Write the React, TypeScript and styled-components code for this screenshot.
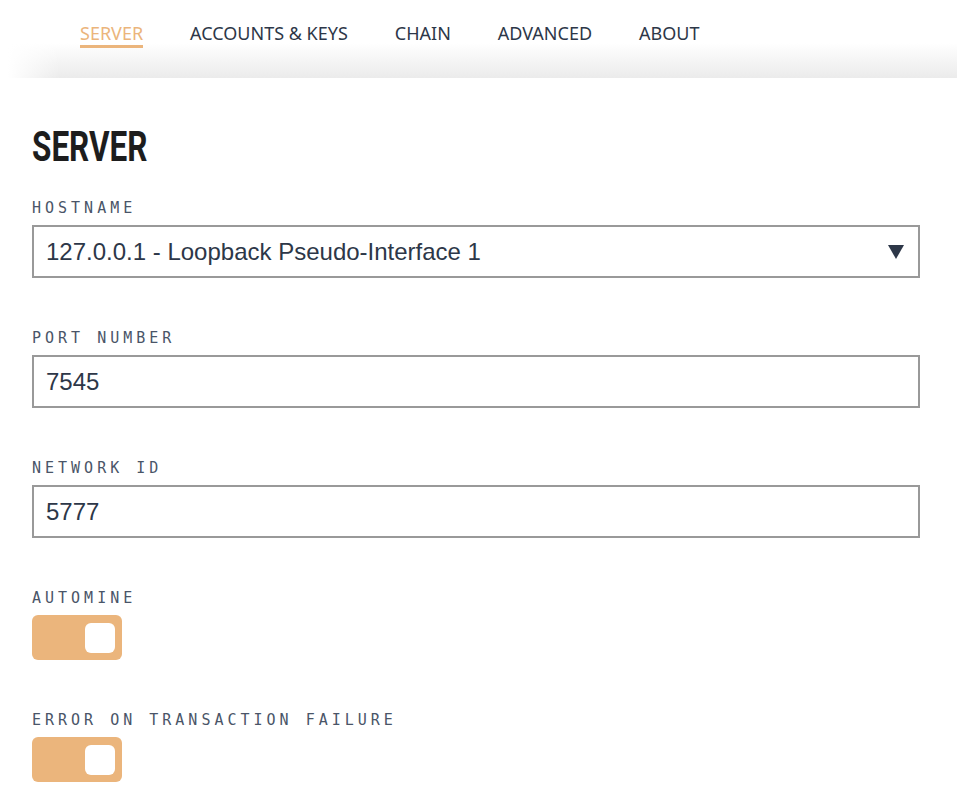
import React from "react";
import styled, { createGlobalStyle } from "styled-components";

const Global = createGlobalStyle`
  html, body { margin: 0; padding: 0; background: #fff; }
  body { font-family: "Noto Sans", sans-serif; overflow-x: hidden; }
  * { box-sizing: border-box; }
`;

const Page = styled.div`
  width: 957px;
  min-height: 807px;
  background: #fff;
`;

const Header = styled.header`
  height: 78px;
  display: flex;
  align-items: flex-start;
  padding: 21px 0 0 80px;
  gap: 47px;
  background:
    linear-gradient(to right, #fff 8px, rgba(255, 255, 255, 0) 60px),
    linear-gradient(to bottom, #fff 55%, #ebebeb 100%);
`;

const Tab = styled.a<{ $active?: boolean }>`
  font-family: "Noto Sans", sans-serif;
  font-size: 18px;
  line-height: 24px;
  color: ${(p) => (p.$active ? "#ebb57c" : "#2d3748")};
  text-decoration: none;
  border-bottom: 3px solid ${(p) => (p.$active ? "#ebb57c" : "transparent")};
  cursor: pointer;
`;

const Main = styled.main`
  padding: 44px 37px 0 32px;
`;

const Title = styled.h1`
  margin: 0 0 26px 0;
  font-family: Roboto, sans-serif;
  font-weight: 700;
  font-size: 42px;
  line-height: 50px;
  color: #1d1d1d;
  display: inline-block;
  transform: scaleX(0.75);
  transform-origin: left center;
`;

const Field = styled.div`
  display: flex;
  flex-direction: column;
  margin-bottom: 50px;
`;

const Label = styled.label`
  font-family: "DejaVu Sans Mono", monospace;
  font-size: 15px;
  line-height: 20px;
  letter-spacing: 4px;
  color: #4a5568;
  margin-bottom: 7px;
`;

const Box = styled.div`
  height: 53px;
  border: 2px solid #999;
  display: flex;
  align-items: center;
  justify-content: space-between;
  padding: 0 14px 0 12px;
  font-family: "Liberation Sans", Arial, sans-serif;
  font-size: 24px;
  color: #2d3748;
  background: #fff;
`;

const Arrow = styled.svg`
  width: 16px;
  height: 16px;
  fill: #2d3748;
  flex: none;
`;

const Toggle = styled.div<{ $on?: boolean }>`
  width: 90px;
  height: 45px;
  border-radius: 6px;
  background: ${(p) => (p.$on ? "#ebb57c" : "#ccc")};
  display: flex;
  align-items: center;
  justify-content: ${(p) => (p.$on ? "flex-end" : "flex-start")};
  padding: 0 7px;
`;

const Knob = styled.div`
  width: 30px;
  height: 30px;
  border-radius: 6px;
  background: #fff;
`;

export default function App() {
  return (
    <Page>
      <Global />
      <Header>
        <Tab $active>SERVER</Tab>
        <Tab>ACCOUNTS &amp; KEYS</Tab>
        <Tab>CHAIN</Tab>
        <Tab>ADVANCED</Tab>
        <Tab>ABOUT</Tab>
      </Header>
      <Main>
        <Title>SERVER</Title>
        <Field>
          <Label>HOSTNAME</Label>
          <Box>
            <span>127.0.0.1 - Loopback Pseudo-Interface 1</span>
            <Arrow viewBox="0 0 16 16">
              <polygon points="0,1 16,1 8,15" />
            </Arrow>
          </Box>
        </Field>
        <Field>
          <Label>PORT NUMBER</Label>
          <Box>7545</Box>
        </Field>
        <Field>
          <Label>NETWORK ID</Label>
          <Box>5777</Box>
        </Field>
        <Field>
          <Label>AUTOMINE</Label>
          <Toggle $on>
            <Knob />
          </Toggle>
        </Field>
        <Field>
          <Label>ERROR ON TRANSACTION FAILURE</Label>
          <Toggle $on>
            <Knob />
          </Toggle>
        </Field>
      </Main>
    </Page>
  );
}
